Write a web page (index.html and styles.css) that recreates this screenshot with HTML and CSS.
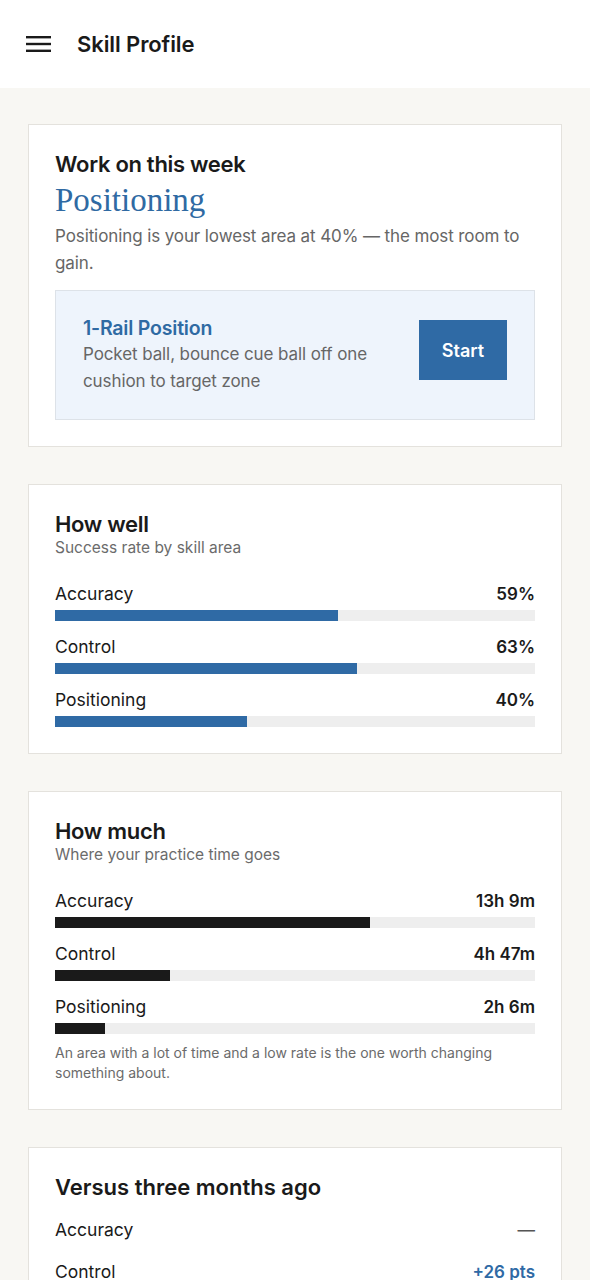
FILE: index.html
```html
<!doctype html>
<html lang="en">
  <head>
    <meta charset="UTF-8" />
    <meta name="viewport" content="width=device-width, initial-scale=1.0" />
    <title>Skill Profile</title>
    <link rel="stylesheet" href="styles.css">
  </head>
  <body>
    <header class="topbar">
      <svg class="menu-icon" width="26" height="18" viewBox="0 0 26 18">
        <rect x="0" y="1" width="25" height="2.4" fill="#1a1a1a" />
        <rect x="0" y="7.8" width="25" height="2.4" fill="#1a1a1a" />
        <rect x="0" y="14.6" width="25" height="2.4" fill="#1a1a1a" />
      </svg>
      <h1 class="page-title">Skill Profile</h1>
    </header>

    <main class="content">
      <section class="card">
        <h2 class="card-title">Work on this week</h2>
        <div class="focus-name">Positioning</div>
        <p class="focus-text">
          Positioning is your lowest area at 40% — the most room to gain.
        </p>
        <div class="drill">
          <div class="drill-info">
            <div class="drill-name">1-Rail Position</div>
            <div class="drill-desc">
              Pocket ball, bounce cue ball off one cushion to target zone
            </div>
          </div>
          <button class="start-btn">Start</button>
        </div>
      </section>

      <section class="card">
        <h2 class="card-title">How well</h2>
        <p class="card-sub">Success rate by skill area</p>
        <div class="rows">
          <div class="row">
            <div class="row-head"><span>Accuracy</span><strong>59%</strong></div>
            <div class="track"><div class="fill blue" style="width: 59%"></div></div>
          </div>
          <div class="row">
            <div class="row-head"><span>Control</span><strong>63%</strong></div>
            <div class="track"><div class="fill blue" style="width: 63%"></div></div>
          </div>
          <div class="row">
            <div class="row-head"><span>Positioning</span><strong>40%</strong></div>
            <div class="track"><div class="fill blue" style="width: 40%"></div></div>
          </div>
        </div>
      </section>

      <section class="card">
        <h2 class="card-title">How much</h2>
        <p class="card-sub">Where your practice time goes</p>
        <div class="rows">
          <div class="row">
            <div class="row-head"><span>Accuracy</span><strong>13h 9m</strong></div>
            <div class="track"><div class="fill dark" style="width: 65.6%"></div></div>
          </div>
          <div class="row">
            <div class="row-head"><span>Control</span><strong>4h 47m</strong></div>
            <div class="track"><div class="fill dark" style="width: 23.9%"></div></div>
          </div>
          <div class="row">
            <div class="row-head"><span>Positioning</span><strong>2h 6m</strong></div>
            <div class="track"><div class="fill dark" style="width: 10.5%"></div></div>
          </div>
        </div>
        <p class="note">
          An area with a lot of time and a low rate is the one worth changing
          something about.
        </p>
      </section>

      <section class="card">
        <h2 class="card-title big">Versus three months ago</h2>
        <div class="compare">
          <div class="compare-row"><span>Accuracy</span><span class="flat">—</span></div>
          <div class="compare-row"><span>Control</span><strong class="up">+26 pts</strong></div>
          <div class="compare-row"><span>Positioning</span><strong class="up">+4 pts</strong></div>
        </div>
      </section>
    </main>
  </body>
</html>
```

FILE: styles.css
```css
* {
  margin: 0;
  padding: 0;
  box-sizing: border-box;
}

body {
  font-family: Inter, "Liberation Sans", Arial, sans-serif;
  background: #f8f7f3;
  color: #1a1a1a;
  width: 590px;
}

.topbar {
  height: 88px;
  background: #ffffff;
  display: flex;
  align-items: center;
  padding: 0 26px;
  gap: 25px;
}

.menu-icon {
  display: block;
}

.page-title {
  font-size: 22px;
  font-weight: 600;
  letter-spacing: -0.1px;
}

.content {
  padding: 36px 28px;
  display: flex;
  flex-direction: column;
  gap: 37px;
}

.card {
  background: #ffffff;
  border: 1px solid #e4e2dd;
  padding: 25px 26px 26px;
}

.card-title {
  font-size: 22px;
  font-weight: 600;
  line-height: 28px;
  letter-spacing: -0.3px;
}

.card-title.big {
  letter-spacing: 0;
}

.focus-name {
  font-family: "Liberation Serif", "Times New Roman", serif;
  font-size: 33px;
  color: #2f6aa3;
  line-height: 45px;
}

.focus-text {
  font-size: 17px;
  color: #666666;
  line-height: 27px;
  letter-spacing: -0.1px;
}

.drill {
  margin-top: 13px;
  background: #eef4fc;
  border: 1px solid #dde2e8;
  padding: 24px 27px 24px 27px;
  display: flex;
  align-items: center;
  justify-content: space-between;
  gap: 40px;
}

.drill-name {
  font-size: 19.5px;
  font-weight: 600;
  color: #2f6aa3;
  line-height: 26px;
  letter-spacing: -0.2px;
}

.drill-desc {
  font-size: 17px;
  color: #666666;
  line-height: 27px;
  letter-spacing: -0.1px;
}

.start-btn {
  background: #2f6aa5;
  color: #ffffff;
  border: none;
  font-family: inherit;
  font-size: 18px;
  font-weight: 600;
  width: 88px;
  height: 60px;
  flex-shrink: 0;
  margin-top: -10px;
}

.card-sub {
  font-size: 15.5px;
  color: #6b6b6b;
  line-height: 20px;
}

.rows {
  margin-top: 24px;
  display: flex;
  flex-direction: column;
  gap: 14px;
}

.row-head {
  display: flex;
  justify-content: space-between;
  font-size: 17.5px;
  line-height: 24px;
}

.row-head strong {
  font-size: 17px;
  font-weight: 600;
}

.track {
  margin-top: 4px;
  height: 11px;
  background: #eeeeee;
}

.fill {
  height: 100%;
}

.fill.blue {
  background: #2f6aa5;
}

.fill.dark {
  background: #1a1a1a;
}

.note {
  margin-top: 9px;
  font-size: 14px;
  color: #6b6b6b;
  line-height: 20px;
}

.compare {
  margin-top: 17px;
  display: flex;
  flex-direction: column;
  gap: 18px;
}

.compare-row {
  display: flex;
  justify-content: space-between;
  font-size: 17.5px;
  line-height: 24px;
}

.compare-row .flat {
  color: #555555;
}

.compare-row .up {
  font-size: 17px;
  color: #2f6aa5;
  font-weight: 600;
}
```
